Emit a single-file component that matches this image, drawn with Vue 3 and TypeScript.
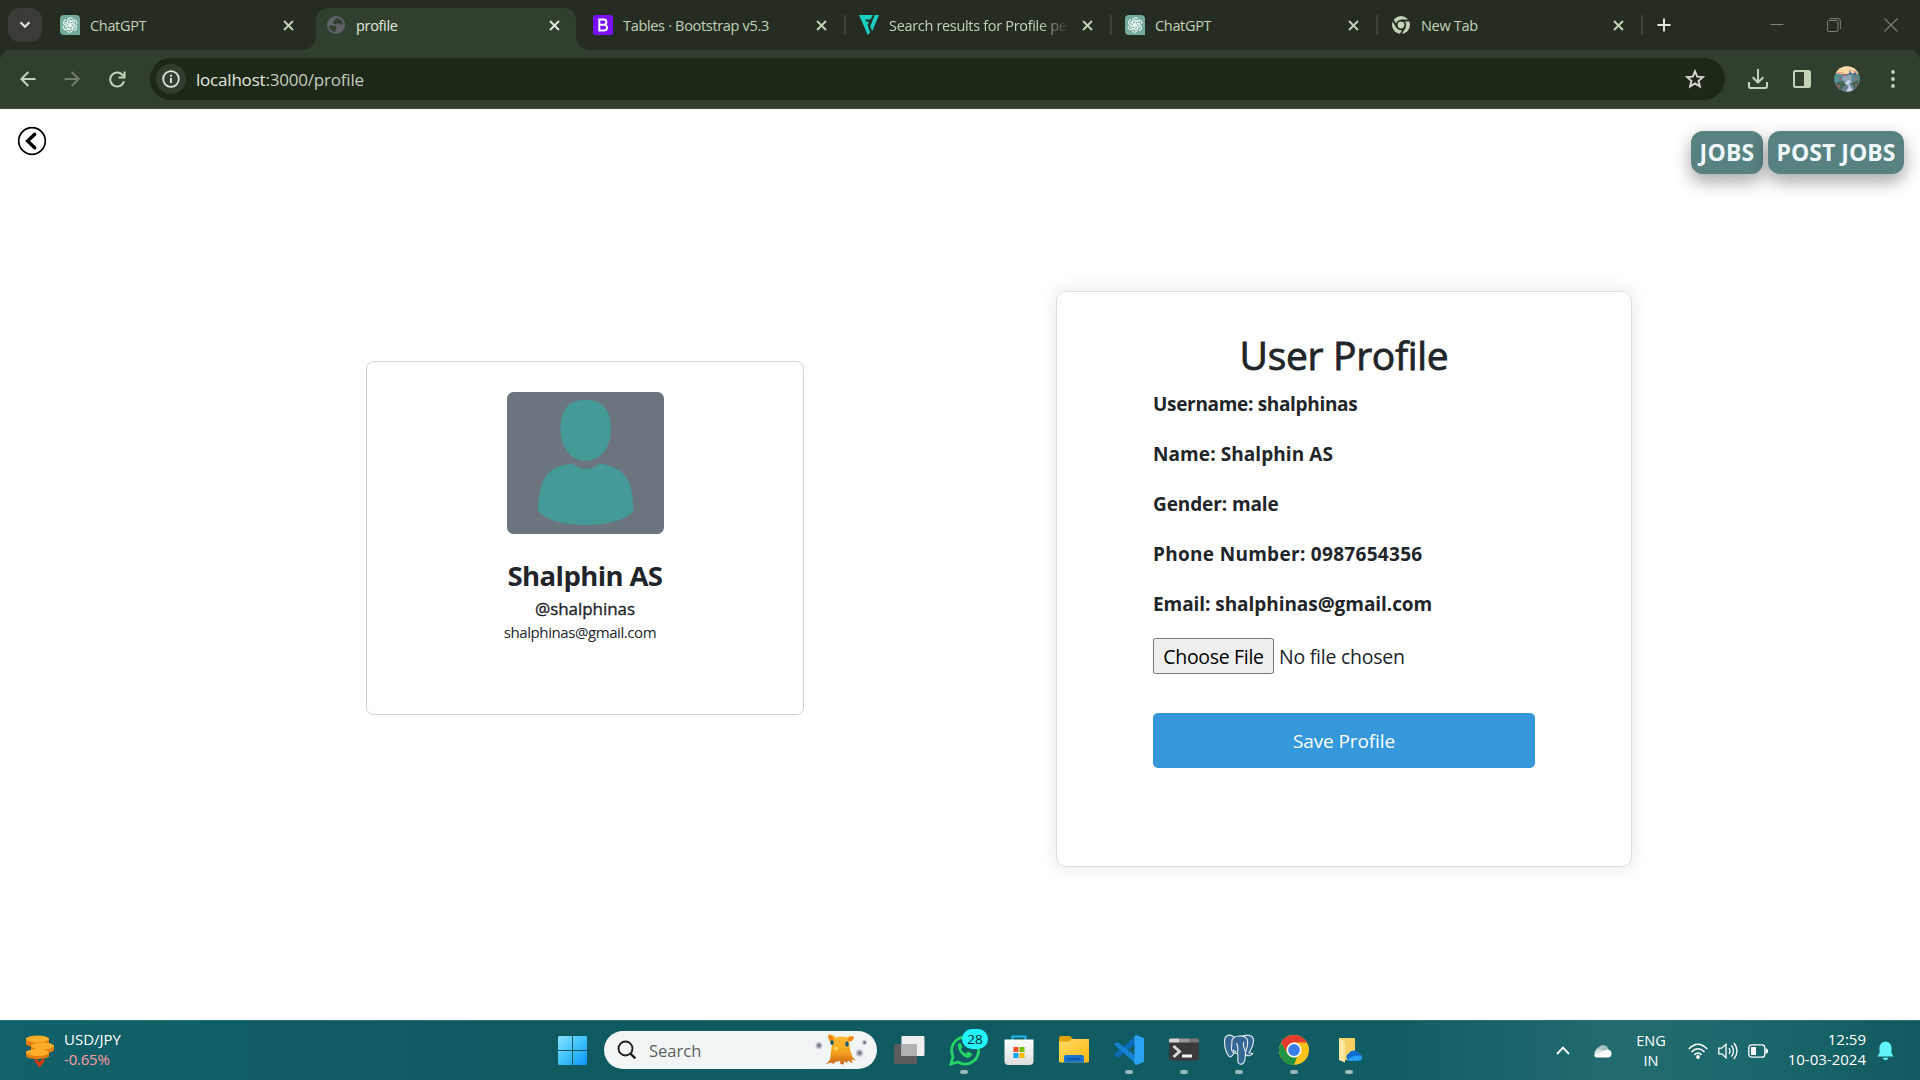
<script setup lang="ts">
interface Tab {
  title: string
  icon: 'gpt' | 'globe' | 'bootstrap' | 'fi' | 'chrome'
  active?: boolean
  divider?: boolean
  cls?: string
}

const tabs: Tab[] = [
  { title: 'ChatGPT', icon: 'gpt' },
  { title: 'profile', icon: 'globe', active: true },
  { title: 'Tables · Bootstrap v5.3', icon: 'bootstrap', divider: true },
  { title: 'Search results for Profile pe', icon: 'fi', divider: true, cls: 'faded' },
  { title: 'ChatGPT', icon: 'gpt', divider: true },
  { title: 'New Tab', icon: 'chrome', divider: true, cls: 'last' },
]

const user = {
  username: 'shalphinas',
  name: 'Shalphin AS',
  gender: 'male',
  phone: '0987654356',
  email: 'shalphinas@gmail.com',
}

const rows = [
  { id: 'username', text: `Username: ${user.username}` },
  { id: 'name', text: `Name: ${user.name}` },
  { id: 'gender', text: `Gender: ${user.gender}` },
  { id: 'phone', text: `Phone Number: ${user.phone}` },
  { id: 'email', text: `Email: ${user.email}` },
]

const petals = [0, 60, 120, 180, 240, 300]
</script>

<template>
  <div class="screen">
    <header class="browser">
      <div class="tabstrip">
        <button class="tab-search">
          <svg width="12" height="8" viewBox="0 0 12 8"><path d="M1.500 1.200 6 5.800l4.500-4.600" fill="none" stroke="#e0e3dc" stroke-width="2.200" /></svg>
        </button>
        <div v-for="(tab, i) in tabs" :key="i" class="tab" :class="[{ active: tab.active, divided: tab.divider }, tab.cls]">
          <div class="tab-body">
            <svg v-if="tab.icon === 'gpt'" class="fav" viewBox="0 0 20 20">
              <path d="M4 0h12a4 4 0 0 1 4 4v16H4a4 4 0 0 1-4-4V4a4 4 0 0 1 4-4z" fill="#74aa9c" />
              <g fill="none" stroke="#e9f5f1" stroke-width="1.150">
                <path v-for="a in petals" :key="a" :transform="`rotate(${a} 10 10)`" d="M7.400 8.500V5.700a3 3 0 0 1 5.300-1.800M7.400 8.500l4.700 2.700M9 4.800l4 2.300" />
              </g>
            </svg>
            <svg v-else-if="tab.icon === 'globe'" class="fav" viewBox="0 0 20 20">
              <circle cx="10" cy="10" r="9" fill="#5f6368" />
              <path d="M3 10.500h4.500c1.500 0 3 1 3 2.500 0 1-1 1.300-1 2.200V17C6 17 3 14 3 10.500zM9.800 3c4 0 7 3 7.200 6.500h-2.500c-1 0-1.200-1.500-2.500-1.500-1.500 0-1.200 1.500-2.500 1.500S7.300 8.500 7.300 7.500C7.300 5.500 9.800 5.500 9.800 3z" fill="#31402e" />
            </svg>
            <svg v-else-if="tab.icon === 'bootstrap'" class="fav" viewBox="0 0 20 20">
              <rect width="20" height="20" rx="2.500" fill="#7a10f8" />
              <path d="M6.300 4.500h4.500a2.600 2.600 0 0 1 0 5.200H6.300zm0 5.200h4.900a2.900 2.900 0 0 1 0 5.800H6.300z" fill="none" stroke="#fff" stroke-width="1.900" />
            </svg>
            <svg v-else-if="tab.icon === 'fi'" class="fav" viewBox="0 0 20 20">
              <path d="M0 0h14l-2.700 4.600H6.200l1 2.200h3L8.500 10l2.700 7.500L8.800 20z" fill="#18d0c4" />
              <path d="M15.800 0H20l-6.800 16-2-4.700z" fill="#18d0c4" />
            </svg>
            <svg v-else class="fav" viewBox="0 0 20 20">
              <circle cx="10" cy="10" r="9" fill="#c3d2b8" />
              <circle cx="10" cy="10" r="4.300" fill="#c3d2b8" stroke="#252d22" stroke-width="1.800" />
              <path d="M10 5.500h9M6 12.200 1.800 5M13.900 12.300 9.500 19.500" stroke="#252d22" stroke-width="1.800" />
            </svg>
            <span class="tab-title">{{ tab.title }}</span>
            <svg class="x" width="11" height="11" viewBox="0 0 11 11"><path d="m1 1 9 9M10 1l-9 9" stroke="currentColor" stroke-width="1.900" /></svg>
          </div>
          <i v-if="tab.divider" class="divider"></i>
        </div>
        <svg class="plus" width="14" height="14" viewBox="0 0 14 14"><path d="M7 .5v13M.5 7h13" stroke="#dfe6d8" stroke-width="2" /></svg>
        <div class="win">
          <svg width="14" height="14" viewBox="0 0 14 14"><path d="M.5 6.500h13" stroke="#7b8177" stroke-width="1" /></svg>
          <svg width="14" height="14" viewBox="0 0 14 14"><g fill="none" stroke="#7b8177"><rect x=".5" y="2.500" width="10.500" height="11" rx="1.500" /><path d="M2.500.6h8.500a2.400 2.400 0 0 1 2.400 2.400v8" /></g></svg>
          <svg width="14" height="14" viewBox="0 0 14 14"><path d="m.5.5 13 13M13.500.5l-13 13" stroke="#7b8177" stroke-width="1.100" /></svg>
        </div>
      </div>
      <div class="toolbar">
        <svg class="nav" width="16" height="16" viewBox="0 0 16 16"><path d="M15.500 8H1.500M8.300 1 1.400 8l6.900 7" fill="none" stroke="#c3d2b8" stroke-width="2" /></svg>
        <svg class="nav dim" width="16" height="16" viewBox="0 0 16 16"><path d="M.5 8h14M7.700 1l6.900 7-6.900 7" fill="none" stroke="#6f7d69" stroke-width="2" /></svg>
        <svg class="nav" width="17" height="17" viewBox="0 0 17 17"><path d="M15 10.300A7 7 0 1 1 13.300 3.700L15 5.500" fill="none" stroke="#c3d2b8" stroke-width="2" /><path d="M15.500.5v6H9.600" fill="none" stroke="#c3d2b8" stroke-width="2" /></svg>
        <div class="omnibox">
          <span class="info"><svg width="18" height="18" viewBox="0 0 18 18"><circle cx="9" cy="9" r="7.800" fill="none" stroke="#e1e5dd" stroke-width="1.800" /><path d="M9 8v5M9 4.800v1.900" stroke="#e1e5dd" stroke-width="1.900" /></svg></span>
          <span class="url"><b>localhost</b>:3000/profile</span>
          <svg class="star" width="20" height="20" viewBox="0 0 20 20"><path d="m10 2.300 2.200 5.300 5.700.5-4.300 3.700 1.300 5.600L10 14.400l-4.900 3 1.300-5.600-4.300-3.700 5.700-.5z" fill="none" stroke="#d5d9d0" stroke-width="1.900" /></svg>
        </div>
        <svg class="dl" width="20" height="20" viewBox="0 0 20 20"><path d="M10 0v13M4.700 8.200l5.300 5.300 5.300-5.300M1 13v4.200A1.800 1.800 0 0 0 2.800 19h14.400a1.800 1.800 0 0 0 1.800-1.800V13" fill="none" stroke="#c3d2b8" stroke-width="2" /></svg>
        <svg class="panel" width="18" height="18" viewBox="0 0 18 18"><rect x="1" y="1" width="16" height="16" rx="1.500" fill="none" stroke="#c3d2b8" stroke-width="2" /><path d="M11 1h6v16h-6z" fill="#c3d2b8" /></svg>
        <svg class="avatar-sm" width="26" height="26" viewBox="0 0 26 26">
          <defs><clipPath id="avc"><circle cx="13" cy="13" r="12.700" /></clipPath></defs>
          <g clip-path="url(#avc)">
            <path d="M0 0h26v26H0z" fill="#68818c" />
            <path d="M0 0h26v8l-8-1-6 1-12-1z" fill="#f9d9a0" />
            <path d="M2 6h6l3 2-6 1zM18 4l6 2-3 2z" fill="#e8a980" />
            <path d="m15 8 1-5 1 5M20 9l1-4 1 4" fill="#314f9c" />
            <path d="M0 9l6-1 3 3-3 4-6 1zM17 9l9 1v4l-7-1z" fill="#4f9295" />
            <path d="M9 10l8-1 1 4-4 3-6-2z" fill="#8fa5b3" />
            <path d="M14 14l4 1-3 3 5 8h-8l3-6-5-3z" fill="#c6cee8" />
            <path d="M2 17l6-2 4 3-5 6zM18 17l6-3v6l-4 2z" fill="#3f6650" />
            <path d="M5 11h2v2H5zM21 11h2v2h-2zM4 19h2v2H4zM21 18h2v2h-2zM10 8h2v2h-2z" fill="#b95658" />
          </g>
        </svg>
        <svg class="dots" width="4" height="18" viewBox="0 0 4 18"><g fill="#c3d2b8"><circle cx="2" cy="2" r="1.900" /><circle cx="2" cy="9" r="1.900" /><circle cx="2" cy="16" r="1.900" /></g></svg>
      </div>
    </header>

    <main class="page">
      <div class="topbar">
        <svg class="back" width="30" height="30" viewBox="0 0 30 30"><circle cx="15" cy="15" r="13.300" fill="none" stroke="#000" stroke-width="1.700" /><path d="M17.700 8.200 10.600 15l7.100 6.800" fill="none" stroke="#000" stroke-width="3.400" stroke-linecap="round" /></svg>
        <div class="actions">
          <button class="pill jobs">JOBS</button>
          <button class="pill post">POST JOBS</button>
        </div>
      </div>
      <div class="cards">
        <section class="summary">
          <svg class="portrait" width="157" height="142" viewBox="0 0 157 142">
            <rect width="157" height="142" rx="6.500" fill="#6c757d" />
            <path d="M78.500 8C96 8 104 18 104 37.500 104 56 92.500 69 78.500 69S53.500 56 53.500 37.500C53.500 18 61 8 78.500 8z" fill="#439a96" />
            <path d="M65.500 71.500c8 7 19 7 27 0C119 76 126 87 126.500 119.500 117 129 99 133 78.500 133S40 129 31 119.500C32 87 39 75 65.500 71.500z" fill="#439a96" />
          </svg>
          <h4 class="s-name">{{ user.name }}</h4>
          <p class="s-handle">@{{ user.username }}</p>
          <p class="s-mail">{{ user.email }}</p>
        </section>
        <section class="details">
          <h2>User Profile</h2>
          <p v-for="r in rows" :key="r.id" class="row" :class="r.id">{{ r.text }}</p>
          <div class="file">
            <button>Choose File</button><span>No file chosen</span>
          </div>
          <button class="save">Save Profile</button>
        </section>
      </div>
    </main>

    <footer class="taskbar">
      <div class="widget">
        <svg width="28" height="36" viewBox="0 0 28 36">
          <g fill="#e57c0d"><path d="M0 3v6c0 4 23 4 23 0V3zM5 10v5c0 4 23 4 23 0v-5zM0 16v5c0 4 23 4 23 0v-5z" /></g>
          <g fill="#ffae2c"><ellipse cx="11.500" cy="4" rx="11.500" ry="3.500" /><ellipse cx="16.500" cy="11" rx="11.500" ry="3.500" /><ellipse cx="11.500" cy="17.500" rx="11.500" ry="3.500" /></g>
          <path d="m8 25 5.500 7.500L19.500 25l-3-1-3 3-3-3z" fill="#d83b0b" />
        </svg>
        <div class="rate"><span class="pair">USD/JPY</span><span class="change">-0.65%</span></div>
      </div>
      <div class="apps">
        <svg class="start" width="29" height="29" viewBox="0 0 29 29">
          <defs><linearGradient id="wg" x1="0" y1="0" x2="29" y2="29" gradientUnits="userSpaceOnUse"><stop offset="0" stop-color="#8ae2ff" /><stop offset=".5" stop-color="#3fc3fc" /><stop offset="1" stop-color="#0a92f8" /></linearGradient></defs>
          <path d="M1 0h13v14H0V1zM15 0h13l1 1v13H15zM0 15h14v14H1l-1-1zM15 15h14v13l-1 1H15z" fill="url(#wg)" />
        </svg>
        <div class="search">
          <svg class="lens" width="20" height="20" viewBox="0 0 20 20"><circle cx="8.500" cy="8.500" r="7" fill="none" stroke="#222" stroke-width="1.900" /><path d="m13.300 13.300 5 5" stroke="#222" stroke-width="2.400" /></svg>
          <span>Search</span>
          <svg class="pet" width="54" height="34" viewBox="0 0 54 34">
            <defs>
              <linearGradient id="pg" x1="0" y1="0" x2="0" y2="1"><stop offset="0" stop-color="#ffbe35" /><stop offset=".6" stop-color="#f5a21c" /><stop offset="1" stop-color="#c96414" /></linearGradient>
              <radialGradient id="bub"><stop offset="0" stop-color="#3d4a51" /><stop offset=".45" stop-color="#98a5ab" /><stop offset="1" stop-color="#e2d8eb" /></radialGradient>
            </defs>
            <path d="M14 2c3-1.500 6 0 7.500 2.500 4-1.500 8-1.500 11 0C34.500 2.500 38 2.500 40 4c-.5 3-2.500 4-5 4.500.5 3 .5 6 1.500 9.500 1.500 4.500 2 7 5.500 9.500l-4.500-1 1 4-4.500-3-1 2.500-2.500-2-1 3.500-3-.5-.5-3-5 1-1.500 2-2.500-1.500-5 1.500c2-2.500 4.500-3 4.500-8 0-4 1-7 1.500-11C15.500 9 14 6 14 2z" fill="url(#pg)" />
            <path d="M14 2c3 0 5 1 6 4l-2 2c-2-1-4-2-4-6zM40 4c-3-1-5 0-6 2.500l1 2c3 0 4-2 5-4.500z" fill="#ee8616" />
            <ellipse cx="18" cy="9.500" rx="1.700" ry="2.600" fill="#125a70" /><ellipse cx="33" cy="11" rx="1.700" ry="2.700" fill="#125a70" />
            <path d="M20 14c2-1 4 0 4 2l-3 2z" fill="#ffd65c" />
            <circle cx="5" cy="12.500" r="3.700" fill="url(#bub)" /><circle cx="50.500" cy="9.500" r="2.700" fill="url(#bub)" /><circle cx="45.500" cy="20" r="4" fill="url(#bub)" />
          </svg>
        </div>
        <div class="app">
          <svg width="32" height="32" viewBox="0 0 32 32"><rect x="1" y="10" width="23" height="20" rx="1.500" fill="#5c5c5c" /><rect x="8.500" y="2" width="23" height="20" rx="1" fill="#efefef" /><path d="M8.500 10H24v12H8.500z" fill="#b0b2b3" /></svg>
        </div>
        <div class="app run">
          <svg width="32" height="32" viewBox="0 0 32 32"><path d="M3 30l2-7.500A13.500 13.500 0 1 1 10 28z" fill="none" stroke="#25d366" stroke-width="2.800" /><path d="M10 9.500l2.500-.5 2 4-1.500 2c1 2 2.500 3.500 5 4.500l2-2 4 2c0 3-2 4.500-5 4.200C14 22.500 9 16 10 9.500z" fill="#25d366" /></svg>
          <span class="badge">28</span>
        </div>
        <div class="app">
          <svg width="32" height="32" viewBox="0 0 32 32"><defs><linearGradient id="st" x1="0" y1="0" x2="0" y2="1"><stop offset="0" stop-color="#fff" /><stop offset="1" stop-color="#dcdcdc" /></linearGradient></defs><path d="M9.500 7V2.500h13V7" fill="none" stroke="#22b8ef" stroke-width="2" /><path d="M1.500 5.500h29V27a4 4 0 0 1-4 4h-21a4 4 0 0 1-4-4z" fill="url(#st)" /><path d="M10.500 13h5v5h-5z" fill="#f25022" /><path d="M16.500 13h5v5h-5z" fill="#7fba00" /><path d="M10.500 19h5v5h-5z" fill="#00a4ef" /><path d="M16.500 19h5v5h-5z" fill="#ffb900" /></svg>
        </div>
        <div class="app">
          <svg width="32" height="32" viewBox="0 0 32 32"><defs><linearGradient id="fo" x1="0" y1="0" x2="1" y2="1"><stop offset="0" stop-color="#ffdc65" /><stop offset="1" stop-color="#fdb914" /></linearGradient></defs><path d="M1 12V4q0-2 2-2h9l3.500 3.500V12z" fill="#e0a008" /><path d="M1 7.500h10L14 5h17v22q0 1.500-1.500 1.500h-27Q1 28.500 1 27z" fill="url(#fo)" /><path d="M6 28.500V23q0-2 2-2h16q2 0 2 2v5.500z" fill="#1673d1" /><path d="M9.500 25h13" stroke="#0d4c96" stroke-width="1.500" /></svg>
        </div>
        <div class="app run">
          <svg width="32" height="32" viewBox="0 0 32 32"><path d="M23 1.500v8L4.500 24 1 20.500z" fill="#0b6bb8" /><path d="M1 10.500 4.500 8 23 22v8z" fill="#1483d2" /><path d="M23 1l8 3v24l-8 3-1.500-1.500V2.500z" fill="#2ba3f3" /></svg>
        </div>
        <div class="app run">
          <svg width="32" height="32" viewBox="0 0 32 32"><rect x="1" y="4.500" width="30" height="22" rx="1.500" fill="#3a3a3a" /><path d="M1 8.500V6q0-1.500 1.500-1.500H11v4z" fill="#d4d4d4" /><path d="M11 4.500h10v4H11z" fill="#9a9a9a" /><path d="M21 4.500h8.500Q31 4.500 31 6v2.500H21z" fill="#777" /><path d="m5.500 12 6 5.500-6 5.500" fill="none" stroke="#d8d8d8" stroke-width="3" /><path d="M14 20.500h10v3H14z" fill="#f2f2f2" /></svg>
        </div>
        <div class="app run">
          <svg width="32" height="32" viewBox="0 0 32 32"><g fill="#336791" stroke="#e6edf3" stroke-width="1.100" stroke-linejoin="round"><path d="M20 2c5-2 10-.5 10.500 4 .4 5-2 9-4.500 13l4 .5c-2 2.500-5 2.500-7 1.500l-1-2z" /><path d="M9.500 2C5-.2 1.300 2 1.500 8c.2 6 2.500 12 4.500 14.300C8 24 10 21 11 18.500L13.500 5z" /><path d="M9 6c2-5 12-5.500 15-1 2 4 0 9-1.500 13-.5 4 .5 8-2 11-2 2-5 1.500-5.500-1-.6-3 .4-6-.5-9-3 1-6-1-6-4 0-3 .5-6 .5-9z" /></g><path d="M14.500 19c1-5 0-8-1-10M21 8c-2 4 1 7 1.500 10M10 16l3 2" fill="none" stroke="#e6edf3" stroke-width="1.100" /></svg>
        </div>
        <div class="app run">
          <svg width="32" height="32" viewBox="0 0 32 32"><circle cx="16" cy="16" r="15" fill="#fcc31e" /><path d="M3 8.500A15 15 0 0 1 29 8.500H16a7.500 7.500 0 0 0-6.500 11.200z" fill="#e33b2e" /><path d="M3 8.500l6.500 11.200A7.500 7.500 0 0 0 19 22.900L16 31A15 15 0 0 1 3 8.500z" fill="#229342" /><circle cx="16" cy="16" r="7.400" fill="#fff" /><circle cx="16" cy="16" r="5.900" fill="#3b7de9" /></svg>
        </div>
        <div class="app run">
          <svg width="32" height="32" viewBox="0 0 32 32"><path d="M6 4h16v22H6z" fill="#f7cf63" /><path d="M6 4l6 4v20.500L6 26z" fill="#ffe6a3" /><path d="M16 26.800a4 4 0 0 1 0-7.500 6 6 0 0 1 10 0q3 1 3 3.800T26 26.800H16z" fill="#0f6cd0" /><path d="M14 26q6-5 12-4.500 3 .5 3 2.500t-3 2.800H16z" fill="#28a0f2" /></svg>
        </div>
      </div>
      <div class="tray">
        <svg class="chev" width="14" height="9" viewBox="0 0 14 9"><path d="M1 8l6-6.300L13 8" fill="none" stroke="#fff" stroke-width="1.900" /></svg>
        <svg class="cloud" width="20" height="14" viewBox="0 0 20 14"><path d="M3 8a4 4 0 0 1 3-5 5.500 5.500 0 0 1 9.500 2L17 9z" fill="#a9c1c3" /><path d="M4 5.500q3-1 5 .7L16 10l-6 3H4A4 4 0 0 1 4 5.500z" fill="#d4e0e1" /><path d="M1 11Q6 9 9 7.500q3-2 6-1.700a4 4 0 0 1 1 7.700H4q-2.500 0-3-2.500z" fill="#fff" /></svg>
        <div class="lang"><span>ENG</span><span>IN</span></div>
        <svg class="wifi" width="20" height="16" viewBox="0 0 20 16"><g fill="none" stroke="#fff" stroke-width="1.500"><path d="M.8 6Q10-3.500 19.200 6M3.500 9q6.500-6.500 13 0M6.300 11.800q3.700-3.700 7.400 0" /></g><circle cx="10" cy="14" r="1.900" fill="#fff" /></svg>
        <svg class="vol" width="20" height="18" viewBox="0 0 20 18"><g fill="none" stroke="#fff" stroke-width="1.300"><path d="M.8 6.200h3L8 2.300v13.400l-4.200-3.900h-3zM11 6q2 3 0 6M13.500 3.500q4 5.500 0 11M16 1q6 8 0 16" /></g></svg>
        <svg class="batt" width="20" height="14" viewBox="0 0 20 14"><rect x=".8" y=".8" width="16" height="12.400" rx="2.800" fill="none" stroke="#fff" stroke-width="1.300" /><path d="M3 3h5v8H3zM17.500 4.500h1q1.500 0 1.500 2.500t-1.500 2.500h-1z" fill="#fff" /></svg>
        <div class="clock"><span class="time">12:59</span><span class="date">10-03-2024</span></div>
        <svg class="bell" width="17" height="20" viewBox="0 0 17 20"><path d="M8.500.5a6 6 0 0 1 6 6V12l2.200 3.500H.3L2.500 12V6.500a6 6 0 0 1 6-6zM5.500 16.800h6q-.8 2.400-3 2.400t-3-2.400z" fill="#60f5fa" /></svg>
      </div>
    </footer>
  </div>
</template>

<style>
body {
  margin: 0;
  overflow: hidden;
}
</style>

<style scoped>
* {
  box-sizing: border-box;
}
.screen {
  width: 1920px;
  height: 1080px;
  display: flex;
  flex-direction: column;
  overflow: hidden;
  background: #fff;
  font-family: "Open Sans", "Noto Sans", sans-serif;
  white-space: nowrap;
}
svg {
  display: block;
  flex: none;
}
button {
  font: inherit;
  border: 0;
  padding: 0;
  margin: 0;
}
h2, h4, p {
  margin: 0;
}

/* browser chrome */
.browser {
  height: 109px;
  flex: none;
  background: #252d22;
}
.tabstrip {
  height: 50px;
  display: flex;
  align-items: center;
}
.tab-search {
  width: 34px;
  height: 34px;
  margin: 0 8px;
  border-radius: 12px;
  background: #3a3c36;
  display: flex;
  align-items: center;
  justify-content: center;
}
.tab {
  width: 266px;
  height: 50px;
  flex: none;
  display: flex;
  align-items: center;
  color: #c3d2b8;
}
.tab-body {
  width: 260px;
  height: 42px;
  margin-top: 8px;
  padding: 0 0 8px 10px;
  display: flex;
  align-items: center;
  flex: none;
}
.divided .tab-body {
  padding-left: 11px;
}
.active .tab-body {
  position: relative;
  background: #31402e;
  border-radius: 12px 12px 0 0;
  color: #e3e8df;
}
.active .tab-body::before,
.active .tab-body::after {
  content: "";
  position: absolute;
  bottom: 0;
  width: 13px;
  height: 13px;
}
.active .tab-body::before {
  left: -13px;
  background: radial-gradient(circle at 0 0, transparent 12.500px, #31402e 13px);
}
.active .tab-body::after {
  right: -13px;
  background: radial-gradient(circle at 100% 0, transparent 12.500px, #31402e 13px);
}
.fav {
  width: 20px;
  height: 20px;
}
.tab-title {
  margin-left: 10px;
  margin-top: 2px;
  width: 178px;
  flex: none;
  overflow: hidden;
  font-size: 14.500px;
  letter-spacing: -0.32px;
  line-height: 20px;
}
.faded .tab-title {
  -webkit-mask-image: linear-gradient(90deg, #000 150px, transparent 180px);
  mask-image: linear-gradient(90deg, #000 150px, transparent 180px);
}
.x {
  margin-left: 15px;
}
.last .x {
  margin-left: 14px;
}
.divider {
  width: 2px;
  height: 20px;
  margin-left: 2px;
  background: #3e423a;
}
.last .divider {
  margin-left: 1px;
}
.plus {
  margin-left: 11px;
}
.win {
  margin-left: auto;
  margin-right: 22px;
  display: flex;
  gap: 43px;
}
.toolbar {
  height: 59px;
  background: #31402e;
  border-radius: 11px 11px 0 0;
  border-bottom: 1px solid #474c44;
  display: flex;
  align-items: center;
}
.nav {
  margin-left: 20px;
}
.nav.dim {
  margin-left: 28px;
}
.nav.dim + .nav {
  margin-left: 29px;
}
.omnibox {
  width: 1575px;
  height: 42px;
  margin-left: 24px;
  padding: 0 20px 0 6px;
  border-radius: 21px;
  background: #1e2819;
  display: flex;
  align-items: center;
}
.info {
  width: 30px;
  height: 30px;
  border-radius: 50%;
  background: #31402e;
  display: flex;
  align-items: center;
  justify-content: center;
}
.url {
  margin: 1px 0 0 10px;
  font-size: 17px;
  letter-spacing: -0.2px;
  line-height: 24px;
  color: #c3ccbd;
}
.url b {
  font-weight: 400;
  color: #e3e8df;
}
.star {
  margin-left: auto;
}
.dl {
  margin-left: 22.500px;
}
.panel {
  margin-left: 25.500px;
}
.avatar-sm {
  margin-left: 23px;
}
.dots {
  margin-left: 30.500px;
}

/* page */
.page {
  height: 911px;
  flex: none;
  color: #212529;
}
.topbar {
  height: 65px;
  display: flex;
  justify-content: space-between;
}
.back {
  margin: 16.500px 0 0 16.500px;
}
.actions {
  display: flex;
  gap: 5px;
  margin: 22px 16px 0 0;
}
.pill {
  height: 43px;
  padding-bottom: 2px;
  border-radius: 12px;
  background: #578280;
  color: #f0f8ff;
  font-size: 23px;
  font-weight: 700;
  box-shadow: 0 8px 16px rgba(0, 0, 0, 0.2), 0 6px 20px rgba(0, 0, 0, 0.19);
}
.jobs {
  width: 72px;
  letter-spacing: 0.2px;
}
.post {
  width: 136px;
}
.cards {
  display: flex;
  align-items: flex-start;
}
.summary {
  width: 438px;
  height: 354px;
  margin: 187px 0 0 366px;
  padding-top: 30px;
  border: 1px solid #d0d0d0;
  border-radius: 7.500px;
  display: flex;
  flex-direction: column;
  align-items: center;
}
.s-name {
  margin-top: 25px;
  font-size: 27.500px;
  line-height: 34px;
  font-weight: 700;
  letter-spacing: -0.6px;
}
.s-handle {
  margin-top: 4px;
  font-size: 17px;
  line-height: 24px;
  letter-spacing: -0.05px;
  -webkit-text-stroke: 0.35px currentColor;
}
.s-mail {
  margin-right: 10px;
  font-size: 15px;
  line-height: 22px;
  letter-spacing: -0.42px;
}
.details {
  width: 576px;
  height: 576px;
  margin: 117px 0 0 252px;
  padding: 39px 96px 0;
  border: 1px solid #ddd;
  border-radius: 10px;
  box-shadow: 0 0 20px rgba(0, 0, 0, 0.1);
}
.details h2 {
  text-align: center;
  font-size: 39px;
  line-height: 48px;
  font-weight: 400;
  letter-spacing: -0.3px;
  -webkit-text-stroke: 0.8px currentColor;
  margin-bottom: 10px;
}
.row {
  height: 30px;
  line-height: 30px;
  margin-bottom: 20px;
  font-size: 19px;
  font-weight: 700;
}
.username {
  letter-spacing: -0.32px;
}
.name {
  letter-spacing: 0.08px;
}
.gender {
  letter-spacing: -0.1px;
}
.phone {
  letter-spacing: 0.3px;
}
.email {
  letter-spacing: -0.06px;
}
.file {
  display: flex;
  align-items: center;
  font-size: 19.500px;
  letter-spacing: -0.25px;
  margin-top: -1px;
}
.file button {
  width: 121px;
  height: 36px;
  border: 1px solid #767676;
  border-radius: 2.500px;
  background: #efefef;
  color: #000;
  letter-spacing: -0.32px;
  margin-right: 5px;
}
.save {
  width: 382px;
  height: 55px;
  margin-top: 39px;
  border-radius: 5px;
  background: #3498db;
  color: #fff;
  font-size: 19px;
  letter-spacing: -0.1px;
}

/* taskbar */
.taskbar {
  height: 60px;
  flex: none;
  display: flex;
  border-top: 1px solid #2b6d72;
  background: linear-gradient(90deg, #11616a 0, #0f5960 560px, #115d64 1400px, #226c6f 1620px, #1a676b 1760px, #10595f 1920px);
  color: #fff;
}
.widget {
  width: 558px;
  padding: 14px 0 0 26px;
  display: flex;
  flex: none;
}
.rate {
  margin: -6px 0 0 10px;
  display: flex;
  flex-direction: column;
  font-size: 15px;
  line-height: 20px;
}
.change {
  color: #ff99a4;
  letter-spacing: -0.2px;
}
.apps {
  display: flex;
  align-items: center;
  width: 819px;
  flex: none;
}
.search {
  width: 273px;
  height: 38px;
  flex: none;
  margin: -1px 4px 0 17px;
  padding-left: 13px;
  border-radius: 19px;
  background: #f1f5f6;
  display: flex;
  align-items: center;
  color: #5c5f60;
  font-size: 16.500px;
}
.search span {
  margin-left: 12px;
  width: 60px;
}
.pet {
  margin-left: 105px;
}
.app {
  width: 55px;
  height: 59px;
  flex: none;
  position: relative;
  display: flex;
  justify-content: center;
  padding-top: 13px;
}
.run::after {
  content: "";
  position: absolute;
  bottom: 6px;
  left: 23.500px;
  width: 8px;
  height: 4px;
  border-radius: 2px;
  background: #9ab8bb;
}
.badge {
  position: absolute;
  left: 26px;
  top: 8px;
  width: 26px;
  height: 20px;
  border-radius: 10px;
  background: #22f5ff;
  color: #002a2e;
  font-size: 13.500px;
  line-height: 20px;
  text-align: center;
}
.tray {
  display: flex;
  align-items: center;
  flex: 1;
  font-size: 14.500px;
  line-height: 20px;
}
.chev {
  margin-left: 179px;
}
.cloud {
  margin-left: 23px;
}
.lang {
  width: 30px;
  margin-left: 23px;
  display: flex;
  flex-direction: column;
  align-items: center;
}
.wifi {
  margin-left: 22px;
}
.vol {
  margin-left: 10px;
}
.batt {
  margin-left: 10px;
}
.clock {
  width: 98px;
  display: flex;
  flex-direction: column;
  align-items: flex-end;
  font-size: 15px;
  margin-top: -3px;
}
.bell {
  margin-left: 11px;
}
</style>
